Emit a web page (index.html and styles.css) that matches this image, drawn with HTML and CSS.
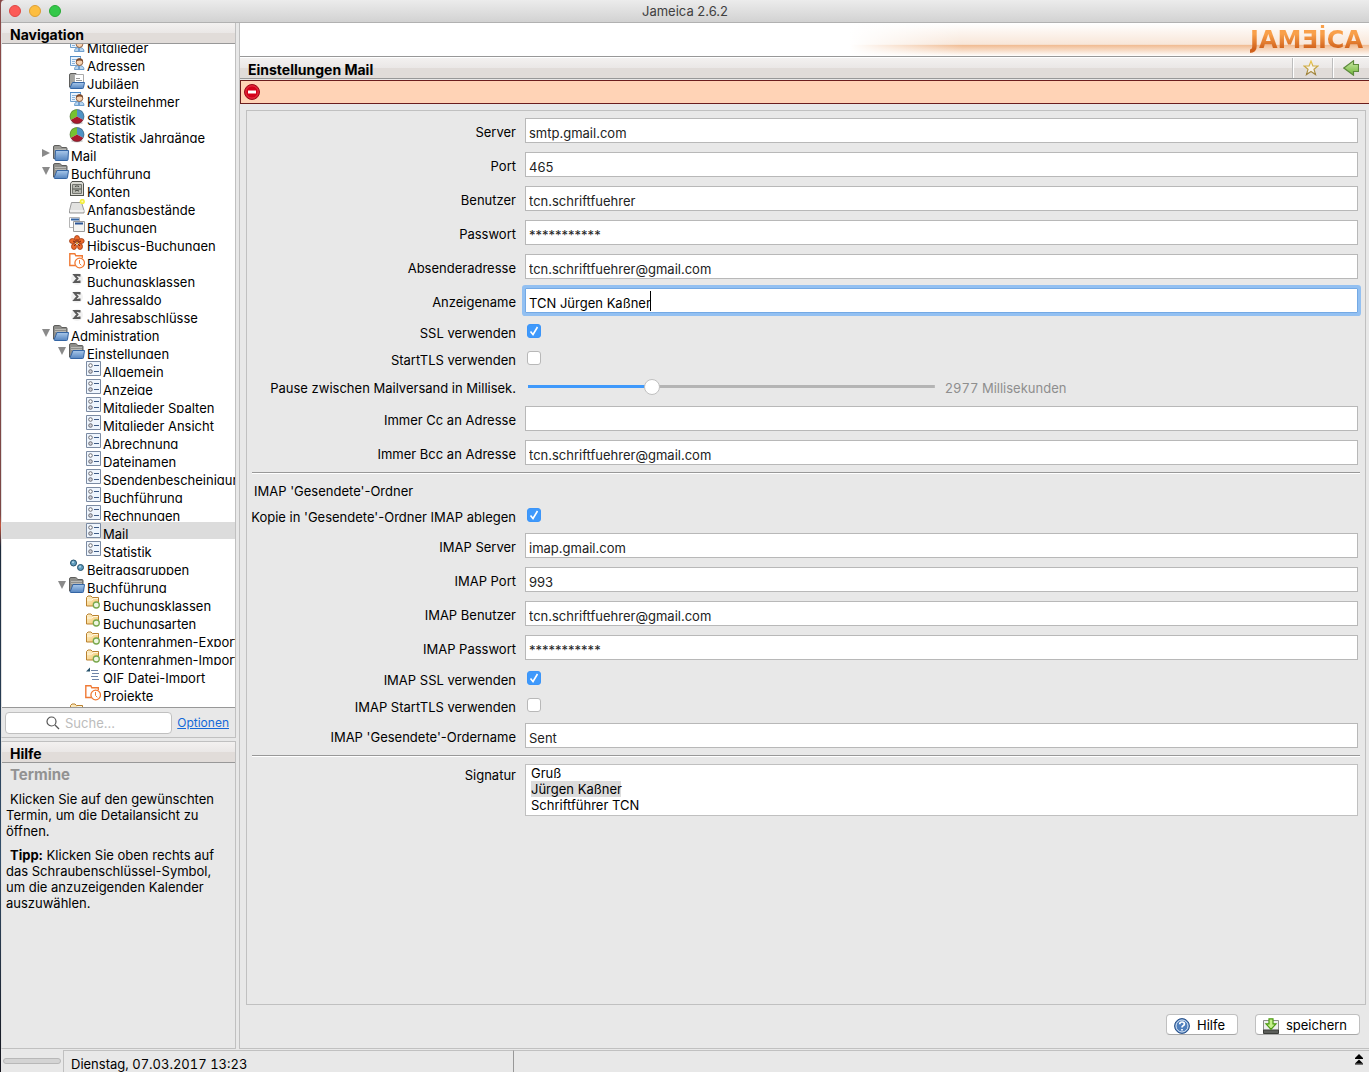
FILE: index.html
```html
<!DOCTYPE html>
<html lang="de">
<head>
<meta charset="utf-8">
<meta name="viewport" content="width=device-width, initial-scale=1">
<title>Jameica 2.6.2</title>
<link rel="stylesheet" href="styles.css">
</head>
<body>
<svg class="defs" width="0" height="0" aria-hidden="true">
  <defs>
    <linearGradient id="g-blue" x1="0" y1="0" x2="0" y2="1"><stop offset="0" stop-color="#a9c8ea"/><stop offset="1" stop-color="#5585c0"/></linearGradient>
    <linearGradient id="g-yellow" x1="0" y1="0" x2="1" y2="1"><stop offset="0" stop-color="#fff3cf"/><stop offset="1" stop-color="#f3c266"/></linearGradient>
    <linearGradient id="g-green" x1="0" y1="0" x2="0" y2="1"><stop offset="0" stop-color="#cdeaa9"/><stop offset="1" stop-color="#6fb536"/></linearGradient>
    <linearGradient id="g-gold" x1="0" y1="0" x2="0" y2="1"><stop offset="0" stop-color="#efc94c"/><stop offset="1" stop-color="#9c8140"/></linearGradient>
  </defs>
  <symbol id="i-folder" viewBox="0 0 16 16">
    <path d="M.5 13.5V2Q.5 .5 2 .5h4.500Q7.500 .5 8 1.500L8.500 2.500H13q1 0 1 1v10z" fill="#9a9a96" stroke="#5e5e5c"/>
    <path d="M2 4.500h11M2 6.500h11" stroke="#b9b9b5"/>
    <path d="M2.500 5.500h13l-.5 9q0 1-1 1H3q-1 0-1-1z" fill="url(#g-blue)" stroke="#3465a4"/>
  </symbol>
  <symbol id="i-folderopen" viewBox="0 0 16 16">
    <path d="M.5 14V2Q.5 .5 2 .5h4.500Q7.500 .5 8 1.500L8.500 2.500H13q1 0 1 1V14z" fill="#8e8e8a" stroke="#5e5e5c"/>
    <path d="M2 4.500h11M2 6.500h11" stroke="#b9b9b5"/>
    <path d="M4 7.500h11.500l-1 7q0 1-1 1H2q-1 0-.8-1z" fill="url(#g-blue)" stroke="#3465a4"/>
  </symbol>
  <symbol id="i-doc" viewBox="0 0 16 16">
    <path d="M.5 14V2Q.5 .5 2 .5h5l1.500 2H14V14z" fill="#a4a4a0" stroke="#5e5e5c"/>
    <path d="M5.500 1.500h9v9h-9z" fill="#fff" stroke="#aaa"/>
    <path d="M7 5.500h4M7 7.500h6" stroke="#999"/>
    <path d="M3.500 9.500h12l-1 5q0 1-1 1H2q-1 0-.8-1z" fill="url(#g-blue)" stroke="#3465a4"/>
  </symbol>
  <symbol id="i-person" viewBox="0 0 16 16">
    <path d="M1.500 1.500h10v9h-10z" fill="#eaf3fc" stroke="#6f9fcd"/>
    <path d="M1 1.500h11" stroke="#4f8bc6"/>
    <path d="M3 4.500h5M3 6.500h3M3 8.500h3" stroke="#8cb4da"/>
    <path d="M5.500 14.500q0-4 4.500-4 5 0 5 4z" fill="#b7d5ef" stroke="#6f9fcd"/>
    <circle cx="10.500" cy="7.200" r="3.300" fill="#f7d1ae" stroke="#8f6142"/>
    <path d="M7 6.500q.5-3.500 3.500-3.300 3.500 0 3.500 3.300-3-2-7 0z" fill="#7c4a2a"/>
    <path d="M10 11v3" stroke="#2f6db3"/>
  </symbol>
  <symbol id="i-pie" viewBox="0 0 16 16">
    <ellipse cx="8" cy="14" rx="6" ry="1.500" fill="#ccc"/>
    <path d="M8 7.500V.3a7.200 7.200 0 0 1 6.300 10.700z" fill="#4f93c4"/>
    <path d="M8 7.500V.3a7.200 7.200 0 0 0-6.300 10.700z" fill="#76c22f"/>
    <path d="M8 7.500L14.300 11a7.200 7.200 0 0 1-12.600 0z" fill="#a9192b"/>
    <circle cx="8" cy="7.500" r="7" fill="none" stroke="#333" stroke-opacity=".35"/>
  </symbol>
  <symbol id="i-cabinet" viewBox="0 0 16 16">
    <path d="M1.500 2.500l1.500-2h10l1.500 2v12h-13z" fill="#d9d9d3" stroke="#50524d"/>
    <path d="M3.500 3.500h9v9h-9z" fill="#b6b8b1" stroke="#73756f"/>
    <path d="M3.500 8h9M6.500 6v-1h3v1M6.500 10.500v-1h3v1" fill="none" stroke="#50524d"/>
    <path d="M1 14.500h14" stroke="#50524d"/>
  </symbol>
  <symbol id="i-tray" viewBox="0 0 16 16">
    <path d="M2.500 3.500h10l2.500 8v2.500H.5v-2.500z" fill="#e2e2e0" stroke="#999"/>
    <path d="M1 12h14" stroke="#fff"/>
    <circle cx="13.300" cy="2.500" r="2.600" fill="#f4ee3c"/><circle cx="13.300" cy="2.500" r="1" fill="#fffbb0"/>
  </symbol>
  <symbol id="i-windows" viewBox="0 0 16 16">
    <path d="M.5 .5h10v10H.5z" fill="#fff" stroke="#b5b5b5"/><path d="M2 2.500h8" stroke="#3465a4" stroke-width="2"/>
    <path d="M4.500 4.500h11v10h-11z" fill="#f4f4f2" stroke="#9a9a9a"/><path d="M6 6.500h8" stroke="#2a5596" stroke-width="2"/>
  </symbol>
  <symbol id="i-flower" viewBox="0 0 16 16">
    <g fill="#ee6a2b" stroke="#9c3b14" stroke-width=".8"><ellipse cx="8" cy="3.500" rx="2.500" ry="3"/><ellipse cx="12.200" cy="6" rx="3" ry="2.500"/><ellipse cx="11" cy="11.500" rx="2.500" ry="3"/><ellipse cx="5" cy="11.500" rx="2.500" ry="3"/><ellipse cx="3.500" cy="6" rx="3" ry="2.500"/></g>
    <path d="M8 8V4M8 8l4-2M8 8l3 3M8 8l-3 3M8 8L4 6" stroke="#7c2a12"/><circle cx="8" cy="8" r="1" fill="#f5b13b"/>
  </symbol>
  <symbol id="i-project" viewBox="0 0 16 16">
    <path d="M6.500 12.500H.8V.8h5l1 2h6.500v2.500" fill="none" stroke="#f07a35" stroke-width="1.400"/>
    <circle cx="10.700" cy="10" r="4.800" fill="#fff" stroke="#f07a35" stroke-width="1.300"/>
    <path d="M10.500 7v3.500l1.800 1.800" fill="none" stroke="#f07a35"/>
  </symbol>
  <symbol id="i-sum" viewBox="0 0 16 16">
    <circle cx="8" cy="8" r="6" fill="#f1f1f1"/>
    <path d="M10.500 5.500V4H5.500l3 3.500-3 3.500h5V9.500" fill="none" stroke="#5a5a5a" stroke-width="2"/>
  </symbol>
  <symbol id="i-form" viewBox="0 0 16 16">
    <path d="M1.500 .5h14v14h-14z" fill="#eef5fd" stroke="#7b8ba3"/>
    <circle cx="5.500" cy="4.500" r="1.800" fill="#fff" stroke="#6a6b73"/><circle cx="5.500" cy="10.500" r="1.800" fill="#cfcfd6" stroke="#6a6b73"/>
    <path d="M9 4.500h5M9 10.500h5" stroke="#3f5c86"/>
  </symbol>
  <symbol id="i-dots" viewBox="0 0 16 16">
    <circle cx="4.500" cy="4" r="3" fill="#5f9cbd" stroke="#24506b"/><circle cx="11.500" cy="8.500" r="3" fill="#5f9cbd" stroke="#24506b"/>
    <circle cx="4" cy="3.300" r="1" fill="#b4d7e8"/><circle cx="11" cy="7.800" r="1" fill="#b4d7e8"/>
  </symbol>
  <symbol id="i-yellow" viewBox="0 0 16 16">
    <path d="M1.500 11V2.500L3 1h3l1.500 1.500h6V11z" fill="url(#g-yellow)" stroke="#b9812f"/>
    <path d="M2 5h5l1.500-1.500H13" fill="none" stroke="#fff7df"/>
    <circle cx="11.300" cy="10" r="3" fill="#eef6e2" stroke="#79a84d" stroke-width="1.300"/>
  </symbol>
  <symbol id="i-qif" viewBox="0 0 16 16">
    <path d="M1 4.500h4V.5z" fill="#24506b"/>
    <path d="M6 3.500h7M7 6.500h7M6 9.500h7M7 12.500h7" stroke="#6f84a8"/>
  </symbol>
</svg>

<header class="titlebar">
  <span class="light red"></span><span class="light amber"></span><span class="light green"></span>
  <h1>Jameica 2.6.2</h1>
</header>

<div class="workspace">
  <aside class="side">
    <section class="panel nav">
      <h2 class="bar">Navigation</h2>
      <ul class="tree">
        <li class="l2"><svg><use href="#i-person"/></svg><span>Mitglieder</span></li>
        <li class="l2"><svg><use href="#i-person"/></svg><span>Adressen</span></li>
        <li class="l2"><svg><use href="#i-doc"/></svg><span>Jubiläen</span></li>
        <li class="l2"><svg><use href="#i-person"/></svg><span>Kursteilnehmer</span></li>
        <li class="l2"><svg><use href="#i-pie"/></svg><span>Statistik</span></li>
        <li class="l2"><svg><use href="#i-pie"/></svg><span>Statistik Jahrgänge</span></li>
        <li class="l1"><i class="closed"></i><svg><use href="#i-folder"/></svg><span>Mail</span></li>
        <li class="l1"><i class="open"></i><svg><use href="#i-folderopen"/></svg><span>Buchführung</span></li>
        <li class="l2"><svg><use href="#i-cabinet"/></svg><span>Konten</span></li>
        <li class="l2"><svg><use href="#i-tray"/></svg><span>Anfangsbestände</span></li>
        <li class="l2"><svg><use href="#i-windows"/></svg><span>Buchungen</span></li>
        <li class="l2"><svg><use href="#i-flower"/></svg><span>Hibiscus-Buchungen</span></li>
        <li class="l2"><svg><use href="#i-project"/></svg><span>Projekte</span></li>
        <li class="l2"><svg><use href="#i-sum"/></svg><span>Buchungsklassen</span></li>
        <li class="l2"><svg><use href="#i-sum"/></svg><span>Jahressaldo</span></li>
        <li class="l2"><svg><use href="#i-sum"/></svg><span>Jahresabschlüsse</span></li>
        <li class="l1"><i class="open"></i><svg><use href="#i-folderopen"/></svg><span>Administration</span></li>
        <li class="l2"><i class="open"></i><svg><use href="#i-folderopen"/></svg><span>Einstellungen</span></li>
        <li class="l3"><svg><use href="#i-form"/></svg><span>Allgemein</span></li>
        <li class="l3"><svg><use href="#i-form"/></svg><span>Anzeige</span></li>
        <li class="l3"><svg><use href="#i-form"/></svg><span>Mitglieder Spalten</span></li>
        <li class="l3"><svg><use href="#i-form"/></svg><span>Mitglieder Ansicht</span></li>
        <li class="l3"><svg><use href="#i-form"/></svg><span>Abrechnung</span></li>
        <li class="l3"><svg><use href="#i-form"/></svg><span>Dateinamen</span></li>
        <li class="l3"><svg><use href="#i-form"/></svg><span>Spendenbescheinigung</span></li>
        <li class="l3"><svg><use href="#i-form"/></svg><span>Buchführung</span></li>
        <li class="l3"><svg><use href="#i-form"/></svg><span>Rechnungen</span></li>
        <li class="l3 selected"><svg><use href="#i-form"/></svg><span>Mail</span></li>
        <li class="l3"><svg><use href="#i-form"/></svg><span>Statistik</span></li>
        <li class="l2"><svg><use href="#i-dots"/></svg><span>Beitragsgruppen</span></li>
        <li class="l2"><i class="open"></i><svg><use href="#i-folderopen"/></svg><span>Buchführung</span></li>
        <li class="l3"><svg><use href="#i-yellow"/></svg><span>Buchungsklassen</span></li>
        <li class="l3"><svg><use href="#i-yellow"/></svg><span>Buchungsarten</span></li>
        <li class="l3"><svg><use href="#i-yellow"/></svg><span>Kontenrahmen-Export</span></li>
        <li class="l3"><svg><use href="#i-yellow"/></svg><span>Kontenrahmen-Import</span></li>
        <li class="l3"><svg><use href="#i-qif"/></svg><span>QIF Datei-Import</span></li>
        <li class="l3"><svg><use href="#i-project"/></svg><span>Projekte</span></li>
        <li class="l2"><svg><use href="#i-yellow"/></svg></li>
      </ul>
      <form class="search">
        <label class="searchbox">
          <svg width="14" height="14" viewBox="0 0 14 14" aria-hidden="true"><circle cx="5.500" cy="5.500" r="4.500" fill="none" stroke="#555" stroke-width="1.200"/><path d="M9 9l4 4" stroke="#555" stroke-width="1.300"/></svg>
          <input type="text" placeholder="Suche..." aria-label="Suche">
        </label>
        <a href="#">Optionen</a>
      </form>
    </section>
    <section class="panel help">
      <h2 class="bar">Hilfe</h2>
      <h3>Termine</h3>
      <p>Klicken Sie auf den gewünschten Termin, um die Detailansicht zu öffnen.</p>
      <p><b>Tipp:</b> Klicken Sie oben rechts auf das Schraubenschlüssel-Symbol, um die anzuzeigenden Kalender auszuwählen.</p>
    </section>
  </aside>

  <main class="content">
    <div class="banner"><span class="logo" aria-label="Jameica">JAMƎİCA</span></div>
    <div class="bar viewbar">
      <h2>Einstellungen Mail</h2>
      <button type="button" class="tool" aria-label="Favorit"><svg width="16" height="16" viewBox="0 0 16 16"><path d="M8 1l1.900 4.900 5.100.1-4 3.200 1.500 5.300L8 11.500l-4.500 3L5 9.200 1 6l5.100-.1z" fill="#f6f2ea" stroke="url(#g-gold)" stroke-width="1.200"/></svg></button>
      <button type="button" class="tool back" aria-label="Zurück"><svg width="16" height="16" viewBox="0 0 16 16"><path d="M.8 8L10.500 .8V4.500h5v7h-5v3.700z" fill="url(#g-green)" stroke="#5d8a3c" stroke-width="1.200"/></svg></button>
    </div>
    <div class="alert" role="alert">
      <svg width="16" height="16" viewBox="0 0 16 16"><circle cx="8" cy="8" r="7.500" fill="#d40019" stroke="#9c0c1a"/><circle cx="8" cy="8" r="6.200" fill="none" stroke="#ec5a68" stroke-opacity=".6"/><path d="M4 6.500h8v3H4z" fill="#fff"/></svg>
    </div>

    <form class="mail">
      <div class="group">
        <div class="fields">
          <label for="server">Server</label><input id="server" type="text" value="smtp.gmail.com">
          <label for="port">Port</label><input id="port" type="text" value="465">
          <label for="user">Benutzer</label><input id="user" type="text" value="tcn.schriftfuehrer">
          <label for="pass">Passwort</label><input id="pass" type="text" value="***********">
          <label for="from">Absenderadresse</label><input id="from" type="text" value="tcn.schriftfuehrer@gmail.com">
          <label for="name">Anzeigename</label><input id="name" class="active" type="text" value="TCN Jürgen Kaßner">
          <label for="ssl">SSL verwenden</label><input id="ssl" type="checkbox" checked>
          <label for="tls">StartTLS verwenden</label><input id="tls" type="checkbox">
          <label for="pause">Pause zwischen Mailversand in Millisek.</label>
          <div class="slider"><input id="pause" type="range" min="0" max="10000" value="2977"><output for="pause">2977 Millisekunden</output></div>
          <label for="cc">Immer Cc an Adresse</label><input id="cc" type="text">
          <label for="bcc">Immer Bcc an Adresse</label><input id="bcc" type="text" value="tcn.schriftfuehrer@gmail.com">
        </div>
        <hr>
        <div class="fields">
          <h3>IMAP 'Gesendete'-Ordner</h3>
          <label for="copy">Kopie in 'Gesendete'-Ordner IMAP ablegen</label><input id="copy" type="checkbox" checked>
          <label for="iserver">IMAP Server</label><input id="iserver" type="text" value="imap.gmail.com">
          <label for="iport">IMAP Port</label><input id="iport" type="text" value="993">
          <label for="iuser">IMAP Benutzer</label><input id="iuser" type="text" value="tcn.schriftfuehrer@gmail.com">
          <label for="ipass">IMAP Passwort</label><input id="ipass" type="text" value="***********">
          <label for="issl">IMAP SSL verwenden</label><input id="issl" type="checkbox" checked>
          <label for="itls">IMAP StartTLS verwenden</label><input id="itls" type="checkbox">
          <label for="ifolder">IMAP 'Gesendete'-Ordername</label><input id="ifolder" type="text" value="Sent">
        </div>
        <hr>
        <div class="fields">
          <label for="sig" class="top">Signatur</label>
          <textarea id="sig" rows="3">Gruß
Jürgen Kaßner
Schriftführer TCN</textarea>
        </div>
      </div>
      <div class="actions">
        <button type="button"><svg width="16" height="16" viewBox="0 0 16 16"><circle cx="8" cy="8" r="7.400" fill="#4f7fbd" stroke="#274f86"/><circle cx="8" cy="8" r="6" fill="none" stroke="#dbe7f5"/><path d="M5.700 6.300q0-2.300 2.400-2.300 2.300 0 2.300 2 0 1.200-1.300 1.800Q8 8.300 8 9.500M8 11v1.500" fill="none" stroke="#fff" stroke-width="1.700"/></svg>Hilfe</button>
        <button type="button"><svg width="16" height="16" viewBox="0 0 16 16"><path d="M.5 2.500h15v10H.5z" fill="#eee" stroke="#8b8d89"/><path d="M.5 12h15v3.500H.5z" fill="#5c5e5a" stroke="#3a3c38"/><path d="M6 .8h4v5h3L8 11.300 3 5.800h3z" fill="#c4f08a" stroke="#4b9a12" stroke-width="1.200"/></svg>speichern</button>
      </div>
    </form>
  </main>
</div>

<footer class="status">
  <div class="progress"></div>
  <div class="clock">Dienstag, 07.03.2017 13:23</div>
  <div class="rest"><svg width="10" height="11" viewBox="0 0 10 11" aria-hidden="true"><path d="M5 0l4 4H1zM5 5.500l4 4H1z" fill="#000"/><path d="M1 4.500h8M1 10h8" stroke="#000"/></svg></div>
</footer>
</body>
</html>
```

FILE: styles.css
```css
* { box-sizing: border-box; }

body {
  display: flex;
  flex-direction: column;
  height: 100vh;
  margin: 0;
  padding-left: 1px;
  overflow: hidden;
  background: linear-gradient(#8a4a48 0, #7c4745 48%, #c8543c 49%, #1c2a3c 51%, #34506c 80%, #14141c 100%);
  color: #000;
  font: 13px/16px Inter, "Liberation Sans", sans-serif;
}

h1, h2, h3, p, ul { margin: 0; padding: 0; }
input, textarea, button { font: inherit; color: inherit; margin: 0; }
.defs { position: absolute; }

/* Window title */
.titlebar {
  position: relative;
  display: flex;
  align-items: center;
  gap: 8px;
  flex: none;
  height: 23px;
  padding: 0 0 1px 8px;
  border-bottom: 1px solid #b1b1b1;
  border-radius: 4px 0 0;
  background: linear-gradient(#ececec, #d2d2d2);
}
.titlebar h1 {
  position: absolute;
  inset: 3px 0 0;
  text-align: center;
  color: #404040;
  font-size: 13px;
  font-weight: 400;
}
.light { width: 12px; height: 12px; border: 1px solid; border-radius: 50%; }
.red { background: #fc5b57; border-color: #df4744; }
.amber { background: #fdbe41; border-color: #de9f34; }
.green { background: #34c84a; border-color: #27aa35; }

.workspace {
  display: grid;
  grid-template-columns: 235px minmax(0, 1fr);
  gap: 3px;
  flex: 1;
  min-height: 0;
  background: #e8e8e8;
}

/* Left column */
.side {
  display: grid;
  grid-template-columns: minmax(0, 1fr);
  grid-template-rows: minmax(0, 715fr) minmax(0, 308fr);
  gap: 3px;
  min-height: 0;
}
.panel {
  display: flex;
  flex-direction: column;
  min-height: 0;
  border: 1px solid #c0c0c0;
  border-left-color: #e0e0e0;
}
.nav { border-top: 0; }

.bar {
  flex: none;
  height: 21px;
  padding: 3px 8px 0;
  border-bottom: 1px solid #989898;
  background: linear-gradient(#f3f1f0, #eae7e6 50%, #e1dcd9 51%, #e1dcd9);
  font-size: 14px;
  line-height: 18px;
  font-weight: 700;
}

.tree {
  flex: 1;
  min-height: 0;
  overflow: hidden;
  background: #fff;
  list-style: none;
  white-space: nowrap;
}
/* the list is scrolled by half a row */
.tree li:first-child { margin-top: -8px; }
.tree li {
  display: flex;
  height: 17px;
  margin-bottom: 1px;
  overflow: hidden;
}
.tree svg { flex: none; width: 16px; height: 16px; margin: 1px 2px 0 0; }
.tree span { line-height: 24px; }
.tree i { flex: none; width: 8px; height: 8px; margin: 5px 3px 0 -11px; background: #8a8a8a; }
.tree .closed { clip-path: polygon(0 0, 100% 50%, 0 100%); }
.tree .open { clip-path: polygon(0 0, 100% 0, 50% 100%); }
.l1 { padding-left: 51px; }
.l2 { padding-left: 67px; }
.l3 { padding-left: 83px; }
.selected { background: #dcdcdc; }

.search {
  display: flex;
  align-items: center;
  gap: 5px;
  flex: none;
  height: 30px;
  padding: 0 6px 0 3px;
  border-top: 1px solid #989898;
}
.searchbox {
  display: flex;
  align-items: center;
  gap: 5px;
  flex: 1;
  min-width: 0;
  height: 22px;
  padding-left: 40px;
  border: 1px solid #c0c0c0;
  border-radius: 4px;
  background: #fff;
}
.searchbox svg { flex: none; }
.searchbox input { width: 100%; min-width: 0; padding: 0; border: 0; outline: 0; background: none; }
.searchbox input::placeholder { color: #bcbcbc; opacity: 1; }
.search a { color: #1468d8; font-size: 12px; }

.help h3 { padding: 4px 8px; color: #929292; font-size: 15px; font-weight: 700; }
.help p { padding: 4px 14px 4px 4px; text-indent: 4px; }

/* Right column */
.content {
  display: flex;
  flex-direction: column;
  min-width: 0;
  min-height: 0;
  border: 1px solid #c0c0c0;
  border-width: 0 0 1px 1px;
}
.banner {
  display: flex;
  justify-content: flex-end;
  align-items: center;
  flex: none;
  height: 34px;
  padding: 0 6px;
  border-bottom: 1px solid #989898;
  background:
    linear-gradient(90deg, #fff 54%, transparent 64%),
    linear-gradient(#fff, #f8e6d8 65%, #f0b98e 66%, #fff);
}
.logo {
  background: linear-gradient(#f9a04a 30%, #d0601a 80%);
  background-clip: text;
  color: transparent;
  font: bold 24px/30px "DejaVu Sans", sans-serif;
}
.viewbar { display: flex; height: 22px; padding: 0 0 0 8px; border-top: 1px solid #fff; }
.viewbar h2 { flex: 1; padding-top: 3px; font-size: 14px; font-weight: 700; }
.tool {
  display: flex;
  align-items: center;
  justify-content: center;
  width: 40px;
  padding: 0 4px 0 0;
  border: 0;
  border-left: 1px solid #bdbdbd;
  box-shadow: inset 1px 0 #fff;
  background: none;
}
.back { width: 37px; padding: 0; }
.alert {
  display: flex;
  align-items: center;
  flex: none;
  height: 24px;
  margin-top: 1px;
  padding-left: 3px;
  border: 1px solid #6b1d1d;
  border-right: 0;
  background: #ffd3b6;
}

.mail { display: flex; flex-direction: column; flex: 1; min-height: 0; padding: 6px 3px 13px 6px; }
.group { flex: 1; min-height: 0; padding: 7px 5px; border: 1px solid #c0c0c0; }
.fields {
  display: grid;
  grid-template-columns: 264px minmax(0, 1fr);
  gap: 9px;
  align-items: center;
  padding: 0 2px 0 0;
}
.fields label { justify-self: end; padding-top: 3px; white-space: nowrap; }
.fields h3 { grid-column: 1 / -1; padding: 2px 2px 0; height: 16px; font-size: 13px; font-weight: 400; }
.fields input[type="text"] {
  width: 100%;
  height: 25px;
  padding: 5px 3px 0;
  border: 1px solid #b8b8b8;
  outline: 0;
  background: #fff;
  color: #222;
}
.fields input.active[type="text"] {
  border-color: #74a9e4;
  border-radius: 1px;
  box-shadow: 0 0 0 3px #92c0f2;
  color: #000;
  /* text cursor */
  background: linear-gradient(#000, #000) 124px 2px / 1px 20px no-repeat #fff;
}
.fields label:has(+ input[type="checkbox"]) { height: 18px; }
input[type="checkbox"] {
  appearance: none;
  width: 14px;
  height: 14px;
  margin-left: 2px;
  border: 1px solid #b8b8b8;
  border-radius: 3px;
  background: #fff;
}
input[type="checkbox"]:checked {
  border-color: #3b95f9;
  background: url("data:image/svg+xml,%3Csvg xmlns='http://www.w3.org/2000/svg' viewBox='0 0 12 12'%3E%3Cpath d='M2.500 6.500l2.500 3 4.500-7.500' fill='none' stroke='white' stroke-width='1.600'/%3E%3C/svg%3E") #3f99fb;
}
.slider { display: flex; align-items: center; gap: 10px; height: 21px; padding-left: 3px; }
.slider output { padding-top: 3px; color: #8e8e8e; font-variant-numeric: tabular-nums; }
input[type="range"] {
  appearance: none;
  width: 49%;
  height: 16px;
  background: linear-gradient(90deg, #3f99fb 30%, #b4b4b4 30%) center / 100% 3px no-repeat;
}
input[type="range"]::-webkit-slider-thumb {
  appearance: none;
  width: 16px;
  height: 16px;
  border: 1px solid #c0c0c0;
  border-radius: 50%;
  background: #fff;
}
hr { height: 2px; margin: 7px 0; border: 0; border-top: 1px solid #989898; background: #fff; }
.fields .top { align-self: start; }
textarea {
  display: block;
  width: 100%;
  height: 52px;
  padding: 0 5px;
  border: 1px solid #c0c0c0;
  outline: 0;
  resize: none;
  overflow: hidden;
  /* second line is marked */
  background: linear-gradient(#dcdcdc, #dcdcdc) 5px 16px / 90px 16px no-repeat #fff;
}

.actions { display: flex; justify-content: flex-end; gap: 17px; padding: 9px 6px 0 0; }
.actions button {
  display: flex;
  align-items: center;
  gap: 7px;
  height: 21px;
  padding: 0 12px 0 7px;
  border: 1px solid #c0c0c0;
  border-bottom-color: #a8a8a8;
  border-radius: 4px;
  background: #fff;
}
.actions svg { margin-top: 3px; }

/* Status line */
.status { display: flex; flex: none; height: 23px; padding-top: 1px; background: #e8e8e8; }
.progress { width: 58px; height: 6px; margin: 8px 2px 0; border: 1px solid #b8b8b8; border-radius: 3px; background: #d4d4d4; }
.clock { width: 451px; padding: 5px 7px 0; border: 1px solid #c0c0c0; border-width: 1px 1px 0; border-right-color: #989898; font-variant-numeric: tabular-nums; }
.rest { display: flex; flex: 1; justify-content: flex-end; padding: 3px 5px; border-top: 1px solid #c0c0c0; }
```
